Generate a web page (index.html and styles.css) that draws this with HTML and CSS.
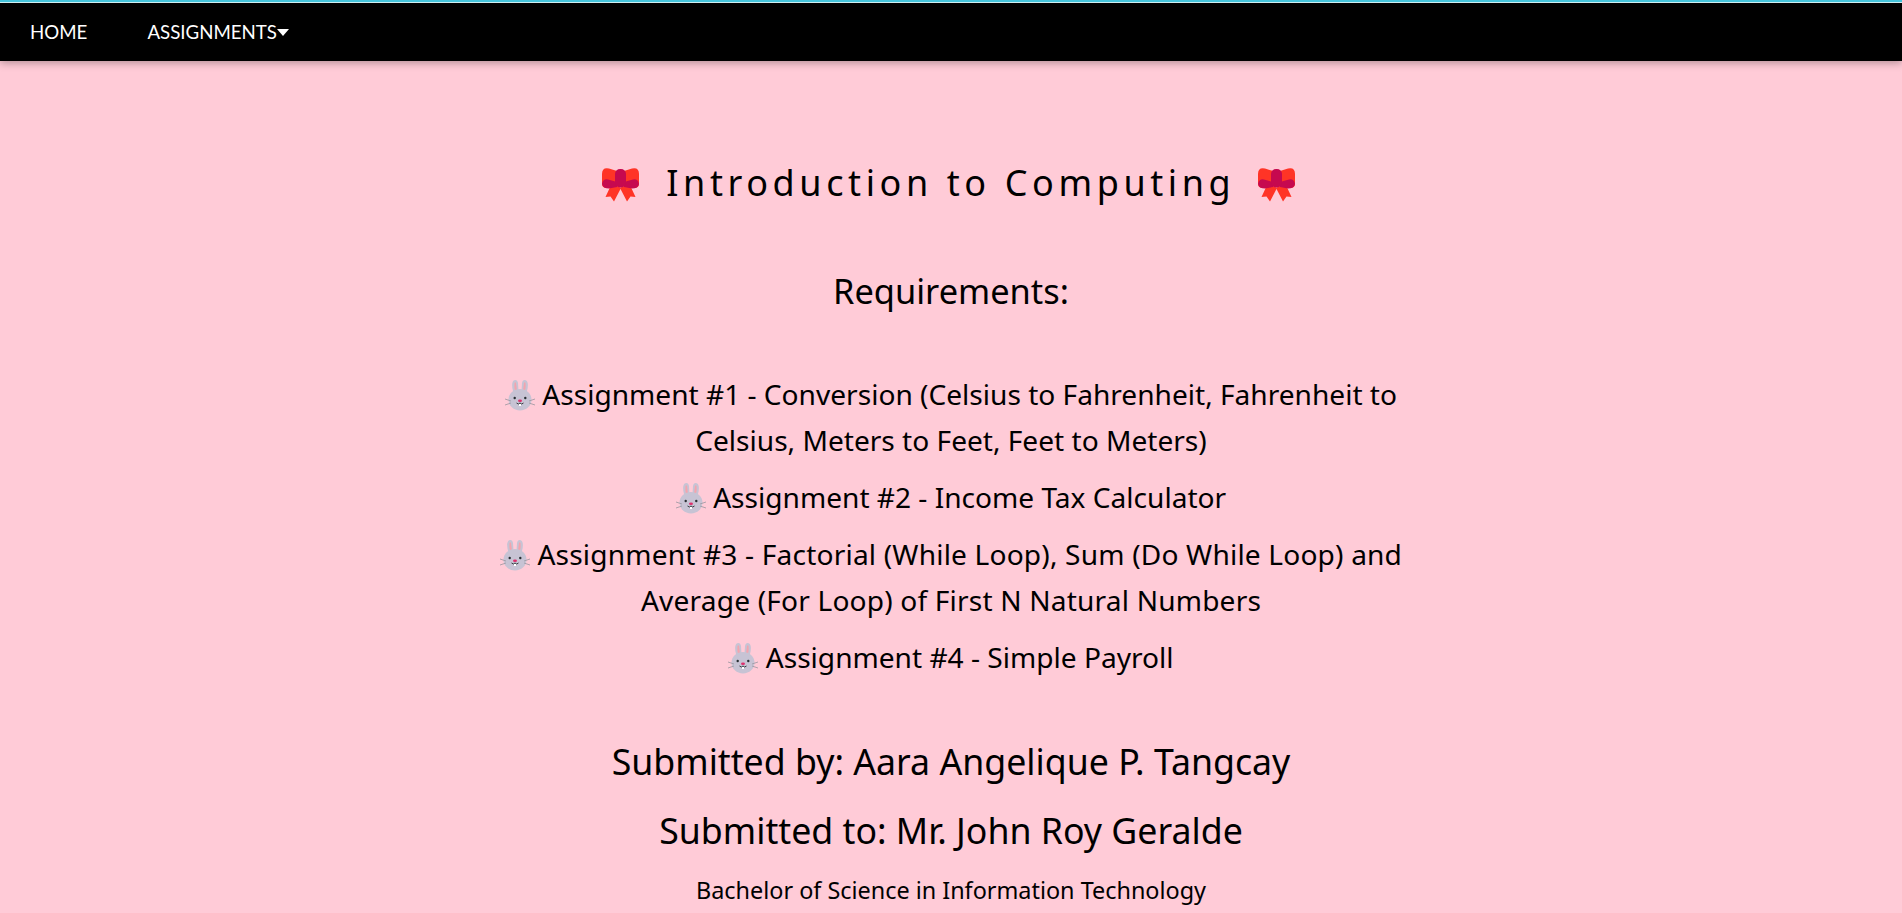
FILE: index.html
```html
<!DOCTYPE html>
<html lang="en">
<head>
<meta charset="utf-8">
<title>Introduction to Computing</title>
<link rel="stylesheet" href="styles.css">
</head>
<body>
<svg class="defs" width="0" height="0" aria-hidden="true">
  <symbol id="bow" viewBox="0 0 37 34">
    <path fill="#ff3426" d="M10 15 L3.500 29 L8.500 28.500 L12 33.500 L19 20Z"/>
    <path fill="#ff3426" d="M27 15 L33.500 29 L28.500 28.500 L25 33.500 L18 20Z"/>
    <path fill="#ff3426" d="M15 3 L7 0.500 Q0 -1 0 6 V16 Q0 20 5 20 L15 17Z"/>
    <path fill="#ff3426" d="M22 3 L30 0.500 Q37 -1 37 6 V16 Q37 20 32 20 L22 17Z"/>
    <path fill="#c6094f" d="M0 16 Q1 10.500 6 11.500 L15 14 V19 L7 20.500 Q1 20.500 0 16Z"/>
    <path fill="#c6094f" d="M37 16 Q36 10.500 31 11.500 L22 14 V19 L30 20.500 Q36 20.500 37 16Z"/>
    <rect fill="#c6094f" x="13" y="1" width="11" height="18.500" rx="5"/>
  </symbol>
  <symbol id="bunny" viewBox="0 0 30 31">
    <path fill="#c7c3d4" d="M9 14 Q6.500 7 7.300 3 Q8 0 10.300 0 Q12.500 0 13 3 L13.500 11Z"/>
    <path fill="#c7c3d4" d="M21 14 Q23.500 7 22.700 3 Q22 0 19.700 0 Q17.500 0 17 3 L16.500 11Z"/>
    <path fill="#f4a3ad" d="M10 11 Q9 6 9.500 3 Q10.300 1.500 11 3 L12 11Z"/>
    <path fill="#f4a3ad" d="M20 11 Q21 6 20.500 3 Q19.700 1.500 19 3 L18 11Z"/>
    <ellipse fill="#c7c3d4" cx="15" cy="19.700" rx="11.500" ry="10.800"/>
    <circle fill="#292f33" cx="9.700" cy="18" r="1.200"/>
    <circle fill="#292f33" cx="20.300" cy="18" r="1.200"/>
    <ellipse fill="#dd2e6c" cx="15" cy="20.700" rx="2" ry="1.300"/>
    <path fill="none" stroke="#292f33" stroke-width="0.900" d="M11.500 23 Q13.500 25 15 23 Q16.500 25 18.500 23"/>
    <rect fill="#fff" x="14" y="24" width="2" height="2"/>
    <path fill="none" stroke="#99959f" stroke-width="0.800" d="M0 19 L6 21 M0 25 L6 23 M30 19 L24 21 M30 25 L24 23"/>
  </symbol>
</svg>
<nav class="topbar">
  <a class="nav-link" href="#">HOME</a>
  <a class="nav-link" href="#">ASSIGNMENTS<span class="caret"></span></a>
</nav>
<main class="content">
  <h1 class="title"><svg class="bow"><use href="#bow"/></svg><span class="title-text">Introduction to Computing</span><svg class="bow"><use href="#bow"/></svg></h1>
  <h2 class="requirements">Requirements:</h2>
  <ul class="assignments">
    <li><svg class="bunny"><use href="#bunny"/></svg> Assignment #1 - Conversion (Celsius to Fahrenheit, Fahrenheit to<br>Celsius, Meters to Feet, Feet to Meters)</li>
    <li><svg class="bunny"><use href="#bunny"/></svg> Assignment #2 - Income Tax Calculator</li>
    <li class="wide"><svg class="bunny"><use href="#bunny"/></svg> Assignment #3 - Factorial (While Loop), Sum (Do While Loop) and<br>Average (For Loop) of First N Natural Numbers</li>
    <li><svg class="bunny"><use href="#bunny"/></svg> Assignment #4 - Simple Payroll</li>
  </ul>
  <p class="credit">Submitted by: Aara Angelique P. Tangcay</p>
  <p class="credit">Submitted to: Mr. John Roy Geralde</p>
  <p class="degree">Bachelor of Science in Information Technology</p>
</main>
</body>
</html>
```
FILE: styles.css
```css
html, body {
  margin: 0;
  padding: 0;
  height: 100%;
  overflow: hidden;
}
body {
  background: #ffcbd7;
  color: #000;
  font-family: "Noto Sans", "Open Sans", sans-serif;
  border-top: 2px solid #45c4dc;
  box-sizing: border-box;
}
.defs {
  display: block;
  position: absolute;
}
.topbar {
  display: flex;
  align-items: center;
  height: 58px;
  background: #000;
  border-top: 1px solid #cfeef2;
  box-shadow: 0 2px 8px rgba(0, 0, 0, 0.3);
  padding-left: 30px;
  gap: 60px;
}
.nav-link {
  color: #fff;
  text-decoration: none;
  font: 18.7px "Lato", sans-serif;
  display: flex;
  align-items: center;
}
.caret {
  width: 0;
  height: 0;
  border-left: 6px solid transparent;
  border-right: 6px solid transparent;
  border-top: 7px solid #fff;
}
.content {
  text-align: center;
  padding-top: 98px;
}
.title {
  margin: 0;
  padding-right: 5px;
  font-weight: 400;
  font-size: 36px;
  letter-spacing: 4.6px;
  line-height: 48px;
  display: flex;
  justify-content: center;
  align-items: center;
  gap: 27px;
}
.title-text {
  margin-right: -4.6px;
}
.bow {
  width: 37px;
  height: 34px;
  margin-top: 4px;
}
.requirements {
  margin: 56px 0 0;
  font-weight: 400;
  font-size: 34.4px;
  line-height: 56px;
}
.assignments {
  list-style: none;
  margin: 52px 0 0;
  padding: 0;
  font-size: 28.1px;
  line-height: 46px;
}
.assignments li {
  margin-bottom: 11px;
}
.assignments .wide {
  letter-spacing: 0.18px;
}
.bunny {
  width: 30px;
  height: 31px;
  vertical-align: -6px;
}
.credit {
  margin: 0 0 11px;
  font-size: 35.7px;
  line-height: 58px;
}
.assignments + .credit {
  margin-top: 52px;
}
.degree {
  margin: 0;
  font-size: 23.4px;
  line-height: 40px;
}
```
